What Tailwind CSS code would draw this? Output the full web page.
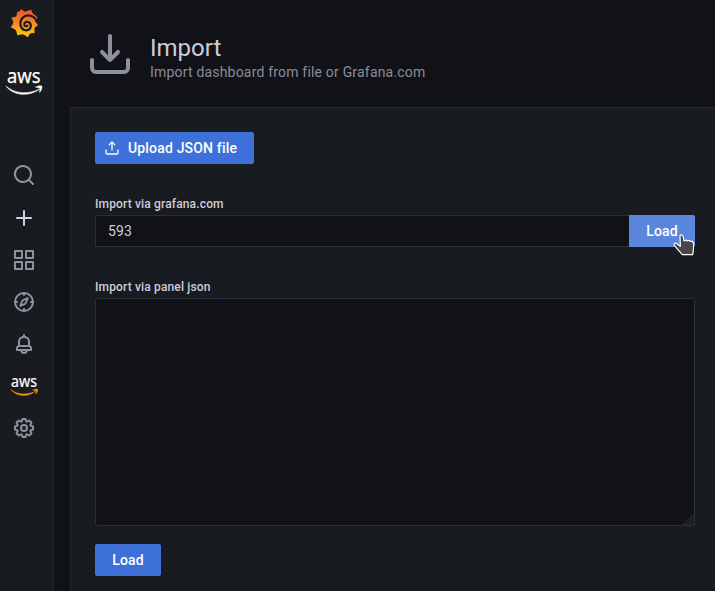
<!DOCTYPE html>
<html lang="en">
<head>
<meta charset="utf-8">
<title>Import</title>
<script src="https://cdn.jsdelivr.net/npm/@tailwindcss/browser@4"></script>
</head>
<body class="relative flex h-[591px] w-[715px] overflow-hidden bg-[#111217] font-[Roboto,sans-serif] text-sm text-[#ccccdc]">
<nav class="flex w-[54px] shrink-0 flex-col items-center border-r border-[#25272c] bg-[#181b1f] pr-[5px] text-[#90919e]">
  <svg class="mt-2 h-[31px] w-[30px] shrink-0" viewBox="0 0 90 93">
    <defs><linearGradient id="flame" x1="0" y1="0" x2="0" y2="1"><stop offset="0" stop-color="#f0522b"/><stop offset=".4" stop-color="#f37b27"/><stop offset="1" stop-color="#fcd20a"/></linearGradient></defs>
    <path fill="url(#flame)" d="M37 3Q43 10 49 11Q58 6 67 5Q68 13 73 18Q80 22 85 29Q82 34 83 40L86 53Q79 55 76 62L77 76Q69 74 62 78L56 88Q48 81 40 79L25 82Q24 72 20 66L5 57Q12 51 13 43L7 28Q16 29 22 25L25 12Q33 11 37 3Z"/>
    <path fill="none" stroke="#181b1f" stroke-width="6.5" stroke-linecap="round" d="M84 43C78 22 54 16 40 30C28 46 36 67 52 67C66 66 69 50 61 44C54 38 45 43 46 50C47 55 52 56 55 53"/>
  </svg>
  <svg class="mt-[29px] h-[30px] w-[42px] shrink-0 overflow-visible" viewBox="-1 0 42 30">
    <text x="3" y="14.8" fill="#fff" font-family="Noto Sans, sans-serif" font-size="20" font-weight="400" stroke="#fff" stroke-width=".25" textLength="33.5" lengthAdjust="spacingAndGlyphs">aws</text>
    <path d="M2 18.2C11 26 25 26.8 36 20.8C25 29 10 28 2 18.2Z" fill="#fff" stroke="#fff" stroke-width=".6"/><path d="M31.5 19.1C35 17.5 37.5 17.5 38 18.3C38.3 20 37.4 22.6 35.5 24.5L36.2 20.2Z" fill="#fff" stroke="#fff" stroke-width=".5"/>
  </svg>
  <svg class="mt-[65px] size-6 shrink-0" viewBox="0 0 24 24" fill="currentColor"><path d="M21.71,20.29,18,16.61A9,9,0,1,0,16.61,18l3.68,3.68a1,1,0,0,0,1.42,0A1,1,0,0,0,21.71,20.29ZM11,18a7,7,0,1,1,7-7A7,7,0,0,1,11,18Z"/></svg>
  <svg class="mt-[19px] size-6 shrink-0 text-[#d0d0df]" viewBox="0 0 24 24" fill="currentColor"><path d="M19,11H13V5a1,1,0,0,0-2,0v6H5a1,1,0,0,0,0,2h6v6a1,1,0,0,0,2,0V13h6a1,1,0,0,0,0-2Z"/></svg>
  <svg class="mt-[18px] size-6 shrink-0" viewBox="0 0 24 24" fill="currentColor"><path d="M10,13H3a1,1,0,0,0-1,1v7a1,1,0,0,0,1,1h7a1,1,0,0,0,1-1V14A1,1,0,0,0,10,13ZM9,20H4V15H9ZM21,2H14a1,1,0,0,0-1,1v7a1,1,0,0,0,1,1h7a1,1,0,0,0,1-1V3A1,1,0,0,0,21,2ZM20,9H15V4h5Zm1,4H14a1,1,0,0,0-1,1v7a1,1,0,0,0,1,1h7a1,1,0,0,0,1-1V14A1,1,0,0,0,21,13Zm-1,7H15V15h5ZM10,2H3A1,1,0,0,0,2,3v7a1,1,0,0,0,1,1h7a1,1,0,0,0,1-1V3A1,1,0,0,0,10,2ZM9,9H4V4H9Z"/></svg>
  <svg class="mt-[18px] size-6 shrink-0" viewBox="0 0 24 24" fill="none" stroke="currentColor" stroke-width="2" stroke-linejoin="round"><circle cx="12" cy="12" r="9"/><path d="M12 3v2m0 14v2M3 12h2m14 0h2" stroke-linecap="round"/><path stroke-width="1.8" d="M15.8 8.2L10.5 10.3L8.2 15.8L13.5 13.7Z"/></svg>
  <svg class="mt-[18px] size-6 shrink-0" viewBox="0 0 24 24" fill="currentColor"><path d="M18,13.18V10a6,6,0,0,0-5-5.91V3a1,1,0,0,0-2,0V4.09A6,6,0,0,0,6,10v3.18A3,3,0,0,0,4,16v2a1,1,0,0,0,1,1H8.14a4,4,0,0,0,7.72,0H19a1,1,0,0,0,1-1V16A3,3,0,0,0,18,13.18ZM8,10a4,4,0,0,1,8,0v3H8Zm4,10a2,2,0,0,1-1.72-1h3.44A2,2,0,0,1,12,20Zm6-3H6V16a1,1,0,0,1,1-1H17a1,1,0,0,1,1,1Z"/></svg>
  <svg class="mt-[18px] h-6 w-[30px] shrink-0 overflow-visible" viewBox="0 0 30 24">
    <text x="2" y="13.2" fill="#fff" font-family="Noto Sans, sans-serif" font-size="15.5" font-weight="400" stroke="#fff" stroke-width=".2" textLength="26" lengthAdjust="spacingAndGlyphs">aws</text>
    <path d="M1.5 15.5C9 21 18 21.3 26.5 17.2C18 23.6 8 22.6 1.5 15.5Z" fill="#f90" stroke="#f90" stroke-width=".4"/><path d="M23.7 16C26 14.8 28.3 14.9 28.6 15.5C28.8 17 28 18.7 26.8 20L27.1 16.8Z" fill="#f90" stroke="#f90" stroke-width=".4"/>
  </svg>
  <svg class="mt-[18px] size-6 shrink-0" viewBox="0 0 24 24" fill="currentColor"><path d="M21.32,9.55l-1.89-.63.89-1.78A1,1,0,0,0,20.13,6L18,3.87a1,1,0,0,0-1.15-.19l-1.78.89-.63-1.89A1,1,0,0,0,13.5,2h-3a1,1,0,0,0-.95.68L8.92,4.57,7.14,3.68A1,1,0,0,0,6,3.87L3.87,6a1,1,0,0,0-.19,1.15l.89,1.78-1.89.63A1,1,0,0,0,2,10.5v3a1,1,0,0,0,.68.95l1.89.63-.89,1.78A1,1,0,0,0,3.87,18L6,20.13a1,1,0,0,0,1.15.19l1.78-.89.63,1.89a1,1,0,0,0,.95.68h3a1,1,0,0,0,.95-.68l.63-1.89,1.78.89A1,1,0,0,0,18,20.13L20.13,18a1,1,0,0,0,.19-1.15l-.89-1.78,1.89-.63A1,1,0,0,0,22,13.5v-3A1,1,0,0,0,21.32,9.55ZM20,12.78l-1.2.4A2,2,0,0,0,17.64,16l.57,1.14-1.1,1.1L16,17.64a2,2,0,0,0-2.79,1.16l-.4,1.2H11.22l-.4-1.2A2,2,0,0,0,8,17.64l-1.14.57-1.1-1.1L6.36,16A2,2,0,0,0,5.2,13.18L4,12.78V11.22l1.2-.4A2,2,0,0,0,6.36,8L5.79,6.89l1.1-1.1L8,6.36A2,2,0,0,0,10.82,5.2l.4-1.2h1.56l.4,1.2A2,2,0,0,0,16,6.36l1.14-.57,1.1,1.1L17.64,8a2,2,0,0,0,1.16,2.79l1.2.4ZM12,8a4,4,0,1,0,4,4A4,4,0,0,0,12,8Zm0,6a2,2,0,1,1,2-2A2,2,0,0,1,12,14Z"/></svg>
</nav>
<main class="flex min-w-0 grow flex-col pl-4">
  <header class="flex h-[107px] shrink-0 pl-4 pt-[30px]">
    <svg class="size-12 shrink-0 text-[#8e8f9c]" viewBox="0 0 24 24" fill="currentColor"><path d="M21,14a1,1,0,0,0-1,1v4a1,1,0,0,1-1,1H5a1,1,0,0,1-1-1V15a1,1,0,0,0-2,0v4a3,3,0,0,0,3,3H19a3,3,0,0,0,3-3V15A1,1,0,0,0,21,14Zm-9.71,1.71a1,1,0,0,0,.33.21.94.94,0,0,0,.76,0,1,1,0,0,0,.33-.21l4-4a1,1,0,0,0-1.42-1.42L13,12.59V3a1,1,0,0,0-2,0v9.59l-2.29-2.3a1,1,0,1,0-1.42,1.42Z"/></svg>
    <div class="pl-4 pt-1">
      <h1 class="text-2xl leading-[28px]">Import</h1>
      <p class="text-sm leading-5 tracking-[0.19px] text-[#8b8c98]">Import dashboard from file or Grafana.com</p>
    </div>
  </header>
  <section class="grow border-l border-t border-[#25272c] bg-[#181b1f] pl-6 pr-5 pt-6">
    <button class="flex h-8 w-[159px] items-center rounded-[2px] bg-[#3d71d9] pl-[9px] font-medium tracking-[0.17px] text-white">
      <svg class="mr-[8px] size-4" viewBox="0 0 24 24" fill="currentColor"><path d="M8.71,7.71,11,5.41V15a1,1,0,0,0,2,0V5.41l2.29,2.3a1,1,0,0,0,1.42,0,1,1,0,0,0,0-1.42l-4-4a1,1,0,0,0-.33-.21,1,1,0,0,0-.76,0,1,1,0,0,0-.33.21l-4,4A1,1,0,1,0,8.71,7.71ZM21,14a1,1,0,0,0-1,1v4a1,1,0,0,1-1,1H5a1,1,0,0,1-1-1V15a1,1,0,0,0-2,0v4a3,3,0,0,0,3,3H19a3,3,0,0,0,3-3V15A1,1,0,0,0,21,14Z"/></svg>Upload JSON file
    </button>
    <div class="mt-[33px] text-xs font-medium leading-[15px] tracking-[0.15px]">Import via grafana.com</div>
    <div class="mt-[3px] flex h-8">
      <div class="flex grow items-center rounded-l-[2px] border border-r-0 border-[#2c2e33] bg-[#111217] pl-3 tracking-[0.15px]">593</div>
      <button class="w-[66px] rounded-r-[2px] bg-[#5a86de] font-medium tracking-[0.15px] text-white">Load</button>
    </div>
    <div class="mt-[33px] text-xs font-medium leading-[15px] tracking-[0.15px]">Import via panel json</div>
    <div class="mt-[3px] flex h-[228px] items-end justify-end rounded-[2px] border border-[#2c2e33] bg-[#111217]">
      <svg class="size-3" viewBox="0 0 12 12" stroke="#555659" stroke-dasharray="1 .7"><path d="M1 12L12 1M4 12L12 4M7 12L12 7M10 12L12 10"/></svg>
    </div>
    <button class="mt-[18px] h-8 w-[66px] rounded-[2px] bg-[#3d71d9] font-medium tracking-[0.15px] text-white">Load</button>
  </section>
</main>
<svg class="absolute left-[673px] top-[234px] h-[23px] w-[22px]" viewBox="0 0 66 69"><path fill="#474747" stroke="#fff" stroke-width="3.5" stroke-linejoin="round" d="M21 5Q25 0 30 6L33 21L39 18L43 21L48 19L52 22L58 22L62 28L61 49L59 62H28L14 46L4 34Q1 27 8 27L22 37Z"/></svg>
</body>
</html>
